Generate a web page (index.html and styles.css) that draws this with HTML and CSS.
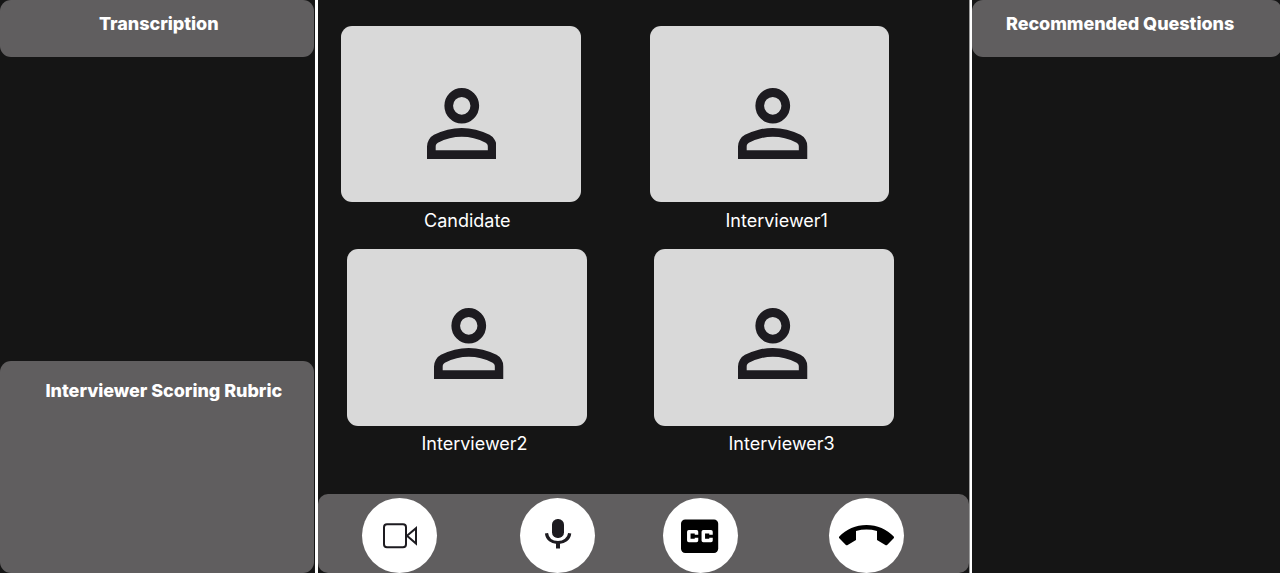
FILE: index.html
```html
<!DOCTYPE html>
<html lang="en">
<head>
<meta charset="utf-8">
<title>Interview</title>
<link rel="stylesheet" href="styles.css">
</head>
<body>
<svg class="defs" width="0" height="0" aria-hidden="true">
  <symbol id="person" viewBox="160 -800 640 640" preserveAspectRatio="none">
    <path d="M480-480q-66 0-113-47t-47-113q0-66 47-113t113-47q66 0 113 47t47 113q0 66-47 113t-113 47ZM160-160v-112q0-34 17.5-62.5T224-378q62-31 126-46.5T480-440q66 0 130 15.5T736-378q29 15 46.500 43.500T800-272v112H160Zm80-80h480v-32q0-11-5.500-20T700-306q-54-27-109-40.500T480-360q-56 0-111 13.500T260-306q-9 5-14.500 14t-5.500 20v32Zm240-320q33 0 56.500-23.500T560-640q0-33-23.500-56.500T480-720q-33 0-56.500 23.500T400-640q0 33 23.500 56.500T480-560Z"/>
  </symbol>
</svg>
<div class="app">
  <aside class="side side-left">
    <section class="panel transcription"><h2>Transcription</h2></section>
    <section class="panel rubric"><h2>Interviewer Scoring Rubric</h2></section>
  </aside>
  <main class="call">
    <div class="row row-top">
      <figure class="tile candidate">
        <div class="video"><svg class="person"><use href="#person"/></svg></div>
        <figcaption>Candidate</figcaption>
      </figure>
      <figure class="tile interviewer1">
        <div class="video"><svg class="person"><use href="#person"/></svg></div>
        <figcaption>Interviewer1</figcaption>
      </figure>
    </div>
    <div class="row row-bottom">
      <figure class="tile interviewer2">
        <div class="video"><svg class="person"><use href="#person"/></svg></div>
        <figcaption>Interviewer2</figcaption>
      </figure>
      <figure class="tile interviewer3">
        <div class="video"><svg class="person"><use href="#person"/></svg></div>
        <figcaption>Interviewer3</figcaption>
      </figure>
    </div>
    <div class="controls">
      <button class="control camera" aria-label="Camera">
        <svg viewBox="0 0 75 75"><g fill="none" stroke="#1d1b20" stroke-width="2"><rect x="22" y="26.300" width="22" height="23" rx="3"/><path d="M45 37.800 54 30.200v15.300z"/></g></svg>
      </button>
      <button class="control mic" aria-label="Microphone">
        <svg viewBox="0 0 75 75"><rect x="32" y="21" width="12" height="19" rx="5.600" fill="#1d1b20"/><path d="M26.500 35.200C27.200 41 31.800 44.600 38 44.600S49 41 49.700 35.200" fill="none" stroke="#1d1b20" stroke-width="3.200"/><path d="M38 44v6.500" stroke="#1d1b20" stroke-width="4"/></svg>
      </button>
      <button class="control captions" aria-label="Closed captions">
        <svg viewBox="0 0 75 75"><rect x="18" y="21.500" width="37.200" height="33.500" rx="4.200"/><path d="M33.500 36.700v-2.900H25.800v8.800h7.700v-2.900M48 36.700v-2.900h-7.700v8.800H48v-2.900" fill="none" stroke="#fff" stroke-width="3.500" stroke-linejoin="round"/></svg>
      </button>
      <button class="control hangup" aria-label="Hang up">
        <svg viewBox="0 0 75 75"><path d="M10.300 38.500C17 31.400 27 27 37.500 27s20.500 4.400 27.200 11.500q.8.900 0 1.700l-6.600 6.700q-.8.800-1.800.2L48 42v-9.100q-10.500-2.600-21 0V42l-8.300 5.100q-1 .6-1.800-.2l-6.600-6.700q-.8-.8 0-1.700z"/></svg>
      </button>
    </div>
  </main>
  <aside class="side side-right">
    <section class="panel questions"><h2>Recommended Questions</h2></section>
  </aside>
</div>
</body>
</html>
```

FILE: styles.css
```css
* { box-sizing: border-box; }
body {
  margin: 0;
  background: #151515;
  color: #fff;
  font-family: Inter, "Liberation Sans", sans-serif;
  overflow: hidden;
}
.defs { display: block; }
.app {
  display: grid;
  grid-template-columns: 315px 657px 308px;
  height: 573px;
}
.side { display: flex; flex-direction: column; }
.side-left { justify-content: space-between; padding-right: 1px; }
.panel { background: #605e5f; border-radius: 11px; }
h2 {
  margin: 0;
  font-size: 18px;
  line-height: 22px;
  font-weight: 800;
  letter-spacing: -0.05px;
  white-space: nowrap;
}
.transcription { height: 57px; padding: 13px 0 0 99px; }
.rubric { height: 212px; padding: 19px 0 0 45.5px; }
.questions { height: 57px; width: 310px; padding: 13px 0 0 34px; }
.call {
  display: flex;
  flex-direction: column;
  padding-right: 1px;
  border-left: 3px solid #fff;
  border-right: 2px solid #fff;
  box-shadow: inset -1px 0 #9a9a9a;
}
.row { display: flex; }
.row-top { padding: 25.5px 0 0 23px; gap: 68.5px; height: 249px; }
.row-bottom { padding-left: 29px; gap: 67px; height: 245px; }
.tile { margin: 0; width: 240px; }
.video {
  height: 176.5px;
  border-radius: 11px;
  background: #d9d9d9;
  padding: 62.5px 0 0 85.5px;
}
.interviewer1 { width: 239.4px; }
.row-bottom .video { padding-top: 59px; }
.interviewer1 .video { padding-left: 88.5px; }
.interviewer2 .video { padding-left: 87px; }
.interviewer3 .video { padding-left: 84px; }
.person { display: block; width: 69.5px; height: 71px; fill: #1d1b20; }
figcaption {
  margin-top: 8px;
  font-size: 18px;
  line-height: 22px;
  padding-left: 83px;
}
.row-bottom figcaption { margin-top: 7px; }
.interviewer1 figcaption { padding-left: 76px; }
.interviewer2 figcaption { padding-left: 74.5px; }
.interviewer3 figcaption { padding-left: 74.5px; }
.controls {
  display: flex;
  height: 79px;
  background: #605e5f;
  border-radius: 10px;
  padding: 4px 0 0 44px;
}
.control {
  flex: none;
  width: 75px;
  height: 75px;
  padding: 0;
  border: 0;
  border-radius: 50%;
  background: #fff;
}
.control svg { display: block; width: 75px; height: 75px; }
.mic { margin-left: 83px; }
.captions { margin-left: 68px; }
.hangup { margin-left: 91.4px; }
```
